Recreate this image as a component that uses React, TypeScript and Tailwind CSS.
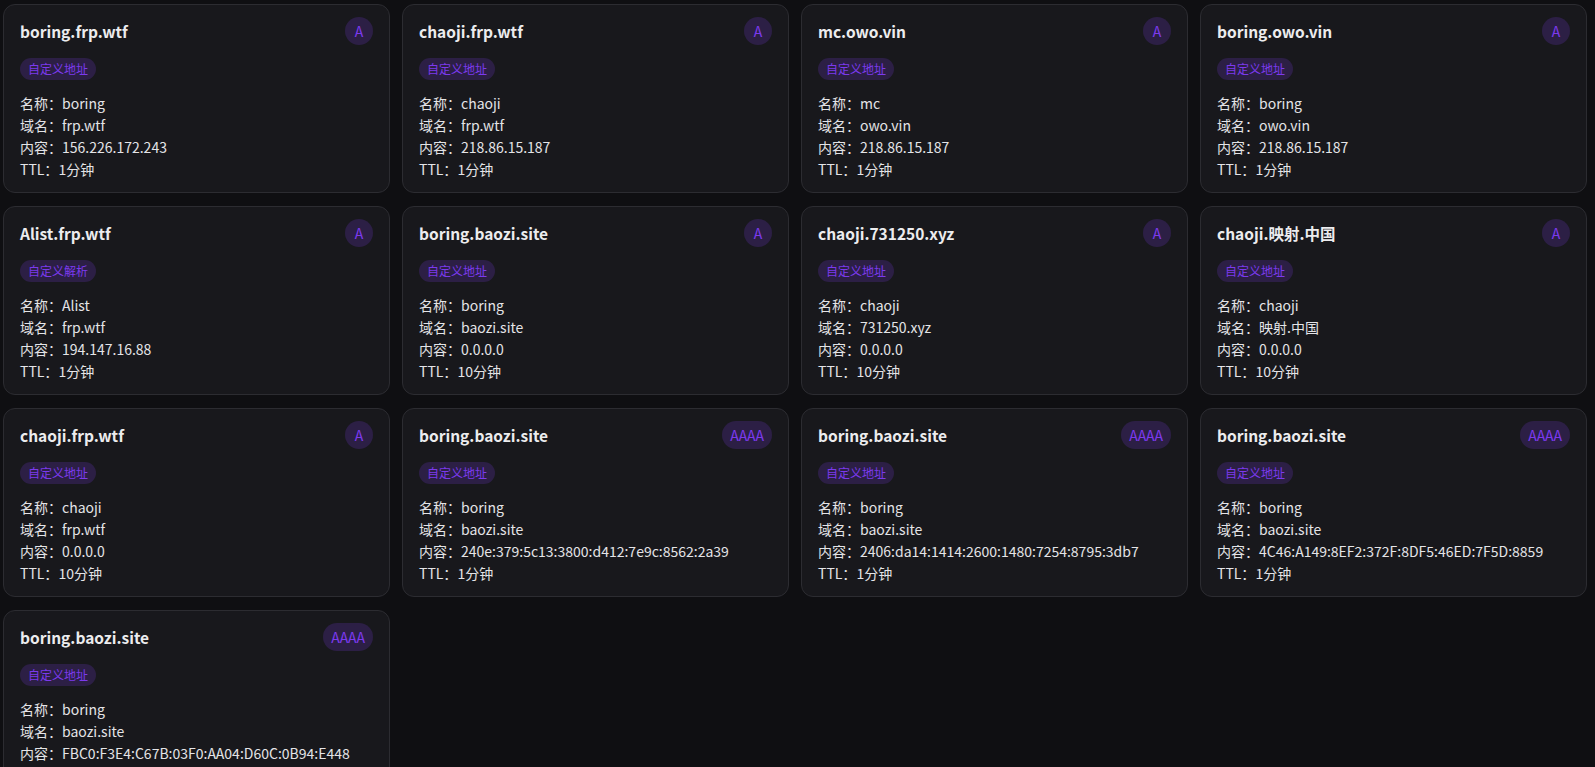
import React from "react";

type Rec = {
  title: string;
  type: string;
  tag: string;
  name: string;
  domain: string;
  content: string;
  ttl: string;
};

const records: Rec[] = [
  { title: "boring.frp.wtf", type: "A", tag: "自定义地址", name: "boring", domain: "frp.wtf", content: "156.226.172.243", ttl: "1分钟" },
  { title: "chaoji.frp.wtf", type: "A", tag: "自定义地址", name: "chaoji", domain: "frp.wtf", content: "218.86.15.187", ttl: "1分钟" },
  { title: "mc.owo.vin", type: "A", tag: "自定义地址", name: "mc", domain: "owo.vin", content: "218.86.15.187", ttl: "1分钟" },
  { title: "boring.owo.vin", type: "A", tag: "自定义地址", name: "boring", domain: "owo.vin", content: "218.86.15.187", ttl: "1分钟" },
  { title: "Alist.frp.wtf", type: "A", tag: "自定义解析", name: "Alist", domain: "frp.wtf", content: "194.147.16.88", ttl: "1分钟" },
  { title: "boring.baozi.site", type: "A", tag: "自定义地址", name: "boring", domain: "baozi.site", content: "0.0.0.0", ttl: "10分钟" },
  { title: "chaoji.731250.xyz", type: "A", tag: "自定义地址", name: "chaoji", domain: "731250.xyz", content: "0.0.0.0", ttl: "10分钟" },
  { title: "chaoji.映射.中国", type: "A", tag: "自定义地址", name: "chaoji", domain: "映射.中国", content: "0.0.0.0", ttl: "10分钟" },
  { title: "chaoji.frp.wtf", type: "A", tag: "自定义地址", name: "chaoji", domain: "frp.wtf", content: "0.0.0.0", ttl: "10分钟" },
  { title: "boring.baozi.site", type: "AAAA", tag: "自定义地址", name: "boring", domain: "baozi.site", content: "240e:379:5c13:3800:d412:7e9c:8562:2a39", ttl: "1分钟" },
  { title: "boring.baozi.site", type: "AAAA", tag: "自定义地址", name: "boring", domain: "baozi.site", content: "2406:da14:1414:2600:1480:7254:8795:3db7", ttl: "1分钟" },
  { title: "boring.baozi.site", type: "AAAA", tag: "自定义地址", name: "boring", domain: "baozi.site", content: "4C46:A149:8EF2:372F:8DF5:46ED:7F5D:8859", ttl: "1分钟" },
  { title: "boring.baozi.site", type: "AAAA", tag: "自定义地址", name: "boring", domain: "baozi.site", content: "FBC0:F3E4:C67B:03F0:AA04:D60C:0B94:E448", ttl: "1分钟" },
];

function Card({ r }: { r: Rec }) {
  return (
    <div className="flex flex-col rounded-[12px] border border-[#2c2c31] bg-[#18181c] px-4 pt-3 pb-3">
      <div className="flex h-7 items-center justify-between">
        <div className="text-[15.5px] font-bold leading-[22px] text-[#ececee]">{r.title}</div>
        <div className="flex h-7 min-w-7 items-center justify-center rounded-full bg-[#2c1f45] px-2 text-[14px] leading-none text-[#7c3aed]">
          {r.type}
        </div>
      </div>
      <div className="mt-[13px] flex">
        <span className="flex h-[22px] items-center rounded-full bg-[#2c1f45] px-2 text-[12px] leading-none text-[#7c3aed]">
          {r.tag}
        </span>
      </div>
      <div className="mt-3 flex flex-col text-[14px] leading-[22px] text-[#e4e4e7]">
        <div>名称：{r.name}</div>
        <div>域名：{r.domain}</div>
        <div>内容：{r.content}</div>
        <div>TTL：{r.ttl}</div>
      </div>
    </div>
  );
}

export default function App() {
  return (
    <div
      className="h-screen overflow-hidden bg-[#0f0f12]"
      style={{ fontFamily: '"Noto Sans CJK SC", "Noto Sans", sans-serif' }}
    >
      <div className="grid grid-cols-4 gap-x-3 gap-y-[13px] pt-1 pl-[3px] pr-[8px]">
        {records.map((r, i) => (
          <Card key={i} r={r} />
        ))}
      </div>
    </div>
  );
}
